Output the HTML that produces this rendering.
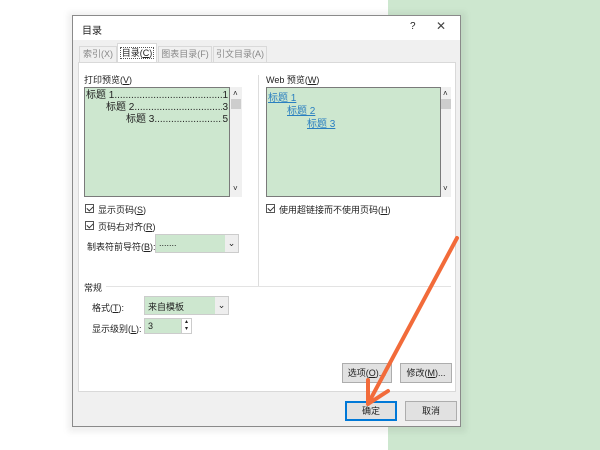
<!DOCTYPE html>
<html><head><meta charset="utf-8"><style>
*{box-sizing:border-box;margin:0;padding:0}
body{width:600px;height:450px;position:relative;overflow:hidden;background:#fff;font-family:"Liberation Sans","Noto Sans CJK SC",sans-serif;font-size:9px;color:#222}
.a{position:absolute}
.green{background:#cde7cf}
.cb{position:absolute;width:9px;height:9px;border:1px solid #555;background:#fff}
.cb:after{content:"";position:absolute;left:2px;top:0px;width:3px;height:5px;border:solid #333;border-width:0 1px 1px 0;transform:rotate(45deg)}
.btn{position:absolute;background:#e1e1e1;border:1px solid #adadad;text-align:center;line-height:18px;font-size:9px}
.sb{position:absolute;background:#f0f0f0}
u{text-decoration:underline}
.lnk{color:#2a7fc0;text-decoration:underline;position:absolute;font-size:10px}
.toc{position:absolute;display:flex;font-size:10px;white-space:nowrap;height:13px;line-height:13px}
.toc .d{flex:1;overflow:hidden}
</style></head><body>
<div class="a green" style="left:388px;top:0;width:212px;height:450px"></div>
<div class="a" style="left:68px;top:12px;width:398px;height:420px;background:rgba(0,0,0,0.06);filter:blur(3px)"></div>
<div class="a" style="left:72px;top:15px;width:389px;height:412px;background:#f0f0f0;border:1px solid #8a8a8a">
 <div class="a" style="left:0;top:0;width:387px;height:24px;background:#fff"></div>
 <div class="a" style="left:9px;top:6px;font-size:10px">目录</div>
 <div class="a" style="left:337px;top:5px;font-size:10px">?</div>
 <div class="a" style="left:363px;top:3px;font-size:12px;color:#444">✕</div>
 <div class="a" style="left:6px;top:30px;width:38px;height:16px;border:1px solid #d9d9d9;border-bottom:none;color:#888;line-height:15px;text-align:center">索引(X)</div>
 <div class="a" style="left:44px;top:27px;width:40px;height:20px;background:#fff;border:1px solid #d9d9d9;border-bottom:none;line-height:18px;text-align:center"><span style="border:1px dotted #555;padding:0 1px">目录(<u>C</u>)</span></div>
 <div class="a" style="left:85px;top:30px;width:54px;height:16px;border:1px solid #d9d9d9;border-bottom:none;color:#888;line-height:15px;text-align:center">图表目录(F)</div>
 <div class="a" style="left:140px;top:30px;width:54px;height:16px;border:1px solid #d9d9d9;border-bottom:none;color:#888;line-height:15px;text-align:center">引文目录(A)</div>
 <div class="a" style="left:5px;top:46px;width:378px;height:330px;background:#fff;border:1px solid #d9d9d9">
  <div class="a" style="left:5px;top:10px">打印预览(<u>V</u>)</div>
  <div class="a green" style="left:5px;top:24px;width:146px;height:110px;border:1px solid #7a7a7a">
   <div class="toc" style="left:1px;top:1px;width:142px"><span>标题 1</span><span class="d">..............................................................</span><span>1</span></div>
   <div class="toc" style="left:21px;top:13px;width:122px"><span>标题 2</span><span class="d">..............................................................</span><span>3</span></div>
   <div class="toc" style="left:41px;top:25px;width:102px"><span>标题 3</span><span class="d">..............................................................</span><span>5</span></div>
  </div>
  <div class="sb" style="left:151px;top:24px;width:12px;height:110px"><div class="a" style="left:3px;top:2px;font-size:8px">˄</div><div class="a" style="left:1px;top:12px;width:10px;height:10px;background:#cdcdcd"></div><div class="a" style="left:3px;top:97px;font-size:8px">˅</div></div>
  <div class="cb" style="left:6px;top:141px"></div><div class="a" style="left:19px;top:140px">显示页码(<u>S</u>)</div>
  <div class="cb" style="left:6px;top:158px"></div><div class="a" style="left:19px;top:157px">页码右对齐(<u>R</u>)</div>
  <div class="a" style="left:8px;top:177px">制表符前导符(<u>B</u>):</div>
  <div class="a green" style="left:76px;top:171px;width:84px;height:19px;border:1px solid #ccc"><div class="a" style="left:3px;top:3px">.......</div><div class="a" style="right:0;top:0;width:13px;height:17px;background:#eee;font-size:9px;text-align:center;line-height:16px">⌄</div></div>
  <div class="a" style="left:179px;top:12px;width:1px;height:212px;background:#ddd"></div>
  <div class="a" style="left:187px;top:10px">Web 预览(<u>W</u>)</div>
  <div class="a green" style="left:187px;top:24px;width:175px;height:110px;border:1px solid #7a7a7a">
   <span class="lnk" style="left:1px;top:1px">标题 1</span>
   <span class="lnk" style="left:20px;top:14px">标题 2</span>
   <span class="lnk" style="left:40px;top:27px">标题 3</span>
  </div>
  <div class="sb" style="left:362px;top:24px;width:10px;height:110px"><div class="a" style="left:2px;top:2px;font-size:8px">˄</div><div class="a" style="left:0;top:12px;width:10px;height:10px;background:#cdcdcd"></div><div class="a" style="left:2px;top:97px;font-size:8px">˅</div></div>
  <div class="cb" style="left:187px;top:141px"></div><div class="a" style="left:200px;top:140px">使用超链接而不使用页码(<u>H</u>)</div>
  <div class="a" style="left:5px;top:218px">常规</div>
  <div class="a" style="left:27px;top:223px;width:345px;height:1px;background:#e3e3e3"></div>
  <div class="a" style="left:13px;top:238px">格式(<u>T</u>):</div>
  <div class="a green" style="left:65px;top:233px;width:85px;height:19px;border:1px solid #ccc"><div class="a" style="left:3px;top:3px">来自模板</div><div class="a" style="right:0;top:0;width:13px;height:17px;background:#eee;text-align:center;line-height:16px">⌄</div></div>
  <div class="a" style="left:13px;top:259px">显示级别(<u>L</u>):</div>
  <div class="a green" style="left:65px;top:255px;width:48px;height:16px;border:1px solid #ccc"><div class="a" style="left:3px;top:2px">3</div><div class="a" style="right:0;top:0;width:10px;height:14px;background:#fff;border-left:1px solid #ccc;font-size:6px;line-height:7px;text-align:center">▴<br>▾</div></div>
  <div class="btn" style="left:263px;top:300px;width:50px;height:20px">选项(<u>O</u>)...</div>
  <div class="btn" style="left:321px;top:300px;width:52px;height:20px">修改(<u>M</u>)...</div>
 </div>
 <div class="btn" style="left:272px;top:385px;width:52px;height:20px;border:2px solid #0078d7;line-height:16px">确定</div>
 <div class="btn" style="left:332px;top:385px;width:52px;height:20px">取消</div>
</div>
<svg class="a" style="left:0;top:0" width="600" height="450">
 <line x1="457" y1="238" x2="369" y2="402" stroke="#f26b3a" stroke-width="4" stroke-linecap="round"/>
 <path d="M368 404 L368 380 M368 404 L388 391" stroke="#f26b3a" stroke-width="4" stroke-linecap="round" fill="none"/>
</svg>
</body></html>
